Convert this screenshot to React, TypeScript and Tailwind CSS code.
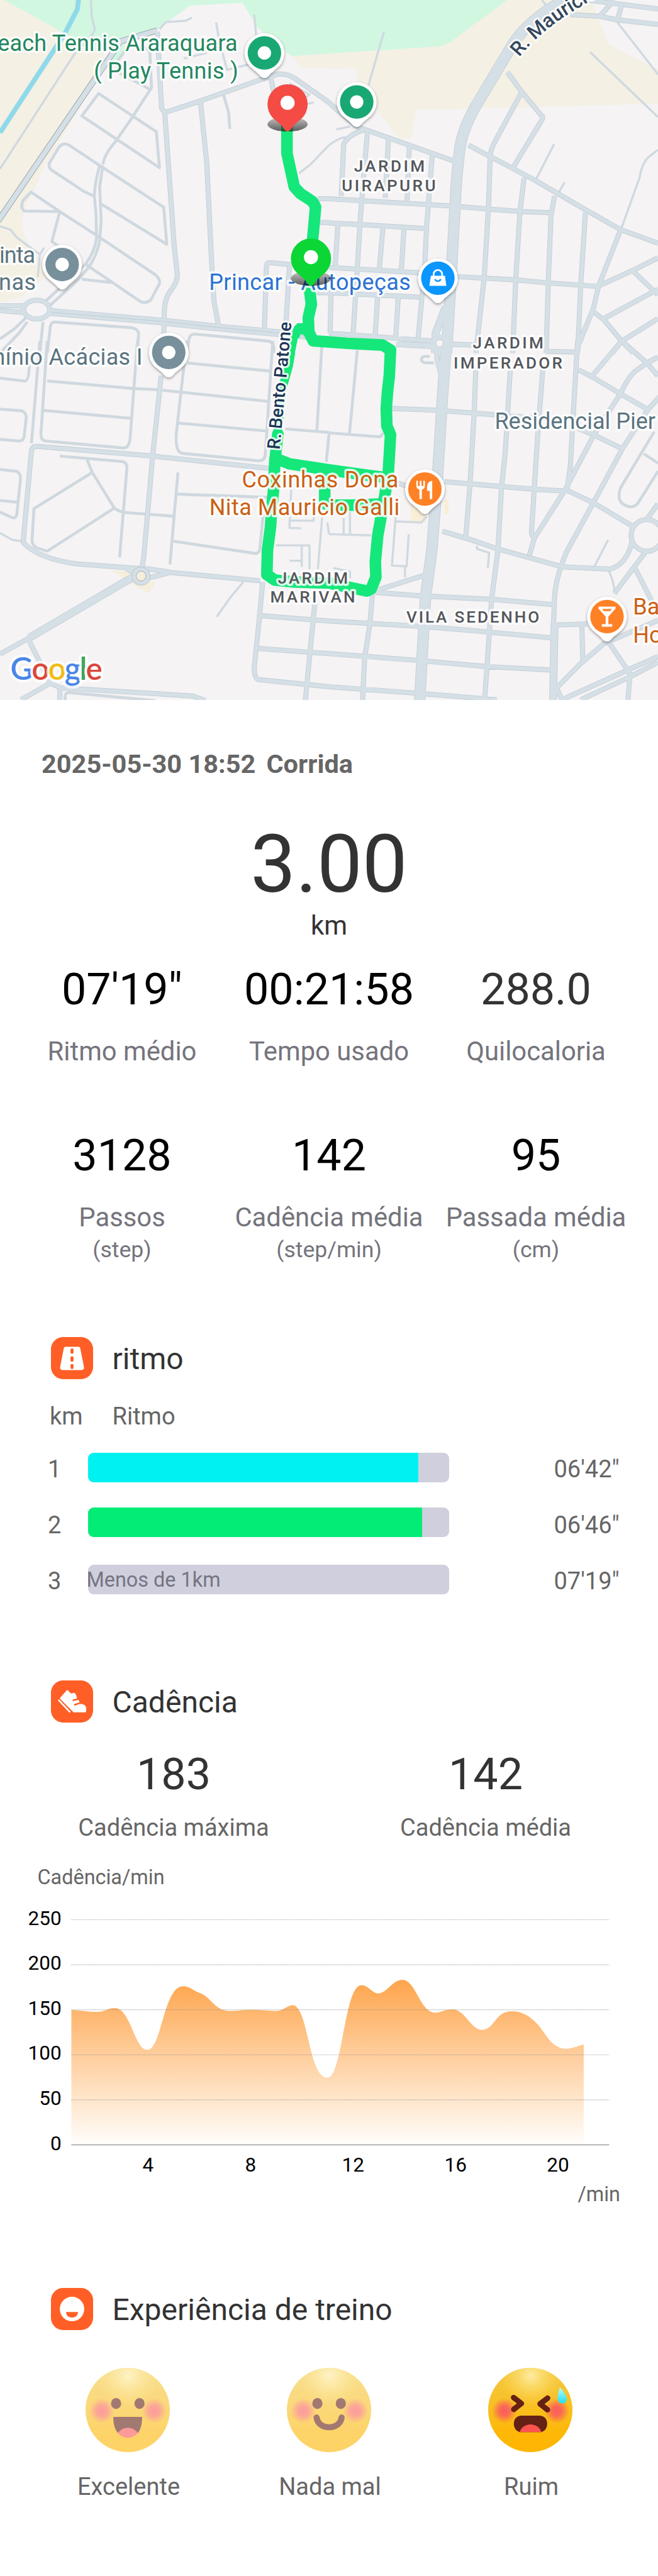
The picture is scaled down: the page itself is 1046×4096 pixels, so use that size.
import React from "react";

/* ------------------------------------------------------------------ map */

type Tile = {
  transform: string;
  minor: string;
  local: string;
  medium: string;
  major: string;
};

const TILE_NW = "scale(0.344388 0.369898)";
const TILE_NE = "translate(540 0) scale(0.344388 0.369898)";
const TILE_SW = "translate(0 560) scale(0.344388 0.382653)";
const TILE_SE = "translate(540 560) scale(0.344388 0.382653)";

const tiles: Tile[] = [
  {
    transform: TILE_NW,
    minor:
      "M680 210Q720 215 715 250L722 390L635 515L550 630Q500 680 490 730 M560 270L600 220 M560 320L712 395 M1065 420L1090 500L1095 572 M470 415L390 515L760 745L745 585Z M475 735L330 645Q300 630 280 655L235 725Q230 745 245 755L400 850L445 870 M475 735L780 920L795 1085L480 905 M475 735Q450 820 450 870L458 960L460 1060Q450 1120 410 1170L215 1340 M490 735L475 830L482 980L475 1070Q460 1140 420 1190L370 1245L240 1355 M285 940L115 937Q95 920 110 890L148 853L285 940L460 1045L740 1220Q765 1240 760 1260L720 1330Q700 1350 670 1340L410 1175 M285 940L247 1073L290 1100 M390 1240L530 1255 M205 1430L190 1568 M225 1568L240 1450Q245 1430 260 1430L620 1455Q665 1460 660 1490L655 1568 M890 1568L900 1510Q905 1482 930 1484L1280 1515Q1310 1520 1305 1568 M130 1405L70 1460L0 1505 M130 1430L90 1480L0 1568",
    local:
      "M0 1358L120 1358 M0 1380L120 1388 M750 140L770 480L785 500L830 1090L845 1220Q845 1250 825 1275L800 1310Q780 1350 783 1410L780 1500 M785 500L950 450L1270 345L1330 328Q1370 328 1400 345L1568 455 M955 450L985 720L1010 1190L1020 1340L1042 1450 M1290 345L1310 430 M1260 1460L1270 1180Q1272 1165 1290 1167L1390 1175 M1380 1175L1360 1480 M1515 883H1568 M1515 988H1568 M1510 1300H1568 M237 1375a62 42 0 1 1 -124 0a62 42 0 1 1 124 0",
    medium: "M235 1385L770 1428L1040 1455L1470 1492",
    major: "",
  },
  {
    transform: TILE_NE,
    minor: "M0 1568",
    local:
      "M0 455L40 490L130 560L170 575L595 715 M0 883L580 915L920 940L1055 945 M0 990L160 998L455 1015 M0 1188L320 1205L440 1212 M600 1228L890 1243L1060 1258L1280 1272 M0 1300L430 1320 M0 1480L500 1515 M170 575Q90 600 70 640L58 870 M183 585L150 960L135 1190L115 1480 M283 620L268 880 M383 650L372 890 M492 690L465 1010L455 1200L425 1500 M42 1000L30 1180 M257 1010L240 1195 M357 1020L345 1200 M10 1300L5 1480 M232 1315L220 1490 M330 1320L318 1500 M850 320L920 410L1010 510Q1025 520 1010 540L880 740 M915 415L790 630Q768 670 768 700L760 920L740 1230L700 1568 M665 645L870 745L990 805L1220 930L1390 1020L1568 1080 M930 790L910 940L890 1240L875 1568 M1075 870L1058 960L1045 1250L1035 1568 M1222 945L1200 1260L1185 1568 M1390 1020L1285 1270L1260 1370L1190 1530 M1285 1270L1450 1200L1568 1145 M1450 1205L1568 1310 M1260 1385L1310 1420L1395 1515L1450 1568 M1310 1415L1568 1285 M1395 1515L1568 1415 M1395 1515L1350 1568 M1230 0L1568 40 M1150 65L1290 72L1370 88L1568 108 M1290 72L1360 0 M1395 20L1375 90 M575 1528L690 1532 M320 1530L500 1540",
    medium: "M555 1365L508 1480L505 1568",
    major:
      "M1140 -10Q960 80 880 190L700 470Q640 570 625 650Q605 800 602 900L575 1340L560 1568",
  },
  {
    transform: TILE_SW,
    minor:
      "M190 0L150 440 M225 0L195 400Q195 430 220 430L590 460Q615 460 620 420L655 0 M225 172L640 205L755 210 M775 212L1280 260 M200 298L620 332 M890 0L840 400Q835 480 870 483L1235 515Q1265 515 1265 480L1300 0 M895 95L1290 130 M850 353L1270 387 M285 495L580 518Q605 520 605 545L570 930 M415 510L440 565L545 718L225 903L180 890Q150 880 153 850L162 720L440 565 M545 718Q570 735 600 737L830 753 M848 565L810 960 M840 658L1280 672 M825 860L1220 913Q1240 910 1240 880L1260 690 M0 160L120 173Q138 170 140 100 M0 293L100 300Q125 305 125 330L115 410Q112 430 90 430L0 423 M0 552L80 560Q98 570 98 590L80 745Q75 765 55 758L0 735 M0 685L85 693 M1360 378L1568 393 M1535 0L1510 390 M1568 400L1555 520 M310 1545V1525Q312 1510 330 1510L740 1545",
    local:
      "M768 150L728 490L685 930L675 980 M1240 1030L820 995L700 978L620 975L370 958Q180 935 110 865L150 470Q155 452 180 453L730 495L1290 548 M140 1275L0 1345 M140 1290L240 1470L290 1490L920 1525L980 1545 M240 1470L100 1541 M285 1495V1545 M1252 1035L1235 1200L1212 1400Q1210 1450 1235 1455L1568 1485 M1245 1180L1568 1203 M1220 1320L1568 1343 M1500 1130L1455 1545 M590 970L650 1005 M700 1020L810 995",
    medium: "M650 1010L600 1032L140 1275",
    major: "",
  },
  {
    transform: TILE_SE,
    minor:
      "M135 40L97 405 M0 395L235 412Q252 412 255 395 M1550 390L1390 630Q1370 680 1400 700Q1440 725 1470 700L1568 560 M1500 485L1568 525 M480 67H450Q430 80 450 93L500 95",
    local:
      "M300 290L510 298L800 318L980 330 M550 605L980 637L1130 645 M330 612L380 625 M540 817L680 855L810 895L1110 970L1340 980Q1420 960 1445 860 M700 110L692 310L672 615L652 840 M865 110L840 480L822 630L805 900L775 1110L742 1541 M1020 110L995 400L965 820Q965 840 980 845L955 920 M980 845L1125 640L1265 400L1390 225Q1430 150 1460 130L1515 95L1568 70 M1185 0L1165 300L1150 540L1135 640 M1190 125L1255 155L1385 225L1520 295 M1255 150L1395 0 M1395 0L1515 95L1568 150 M1575 240L1520 295L1400 460L1260 695L1130 910Q1080 1020 1075 1100L1070 1220 M1130 640L1260 695L1445 795 M1185 375L1265 405L1400 465 M1590 835a75 68 0 1 1 -150 0a75 68 0 1 1 150 0 M1515 765L1568 700 M1510 905L1455 970L1360 1085 M1455 970L1540 1120 M220 1080L440 1095L780 1110L1065 1132 M230 1070L460 1005 M0 1203L430 1225L760 1250L1060 1275 M0 1343L420 1372L745 1398L1055 1413 M0 1485L410 1512L800 1541 M207 1090L195 1215L170 1360L160 1541 M1085 1220L1230 1215 M1205 1225L1210 1370 M1085 1490L1200 1385L1310 1300L1568 1200 M1330 1290L1435 1430L1425 1541 M1110 1541L1420 1415L1568 1355 M1200 1541L1440 1440L1568 1380 M1085 1490L1110 1541 M330 12L500 20 M575 15L700 18 M1035 45L1180 48 M510 0L515 80L535 150",
    medium: "M1075 1215L1068 1545",
    major: "M560 -5L540 250L515 620L490 900L460 1100L432 1545",
  },
];

const paths: { transform: string; d: string }[] = [
  {
    transform: TILE_NW,
    d: "M433 0L437 70L452 130L440 155L355 240L0 750 M1030 100L1045 180L1082 310L1190 285 M1212 65L1222 170 M760 130L790 98L885 92L915 78 M875 260L985 235 M0 1005L50 1020L80 1055L190 1130 M210 1100L190 1130L180 1230 M1425 770L1480 730L1568 645 M1380 370L1475 420L1400 475L1495 455",
  },
  {
    transform: TILE_NE,
    d: "M0 645Q50 610 80 610 M1375 100L1568 330 M1245 232L1568 520 M262 140L188 380 M1073 640L985 800 M1123 810L1095 855 M1395 1010L1480 790Q1490 730 1520 700L1568 665 M1015 0L1040 30 M35 575L100 562",
  },
  {
    transform: TILE_SW,
    d: "M0 825L60 855L105 860 M1160 1035L1095 1105L1033 1185 M1535 760L1515 980 M1390 600L1380 790L1380 803L1435 805 M1385 772H1495V750 M1315 878H1475V980 M1438 880V970 M1380 944H1440 M1568 830L1560 780",
  },
  {
    transform: TILE_SE,
    d: "M0 830L200 835 M70 760V830 M100 735V830 M318 750L300 965L370 968L380 830 M362 970V1015 M320 775L440 780L465 755 M705 880V893L763 910L757 975 M1330 855L1265 968 M1335 990Q1360 1040 1360 1075 M20 975L100 990V1020",
  },
];

function RoadPass({ kind, color, width }: { kind: "minor" | "local" | "medium" | "major"; color: string; width: number }) {
  return (
    <>
      {tiles.map((t) => (
        <g key={t.transform} transform={t.transform}>
          <path d={t[kind] || "M0 0"} stroke={color} strokeWidth={width} vectorEffect="non-scaling-stroke" />
        </g>
      ))}
    </>
  );
}

function PoiPin({ x, y, color, children }: { x: number; y: number; color: string; children?: React.ReactNode }) {
  return (
    <g transform={`translate(${x} ${y})`}>
      <path
        d="M0 41C-5 41 -7 37 -11 33L-24 22A32.5 32.5 0 1 1 24 22L11 33C7 37 5 41 0 41Z"
        fill="#fff"
        filter="url(#pinShadow)"
      />
      <circle r="27.5" fill={color} />
      {children ?? <circle r="11" fill="#fff" />}
    </g>
  );
}

function RoutePin({ x, y, color, tip }: { x: number; y: number; color: string; tip: number }) {
  return (
    <g transform={`translate(${x} ${y})`}>
      <ellipse cy="32" rx="33" ry="12" fill="url(#ground)" />
      <path d={`M0 ${tip}C-4 ${tip} -7 38 -10 34L-24 22A33 33 0 1 1 24 22L10 34C7 38 4 ${tip} 0 ${tip}Z`} fill={color} />
      <circle cy="-3" r="11.6" fill="#fff" />
    </g>
  );
}

function MapLabel({
  x,
  y,
  end,
  color,
  children,
}: {
  x: number;
  y: number;
  end?: number;
  color: string;
  children: string;
}) {
  return (
    <text
      x={x}
      y={y}
      fontSize="37.2"
      fill={color}
      stroke="#fff"
      strokeOpacity="0.85"
      strokeWidth="7"
      strokeLinejoin="round"
      paintOrder="stroke"
      textLength={end ? end - x : undefined}
    >
      {children}
    </text>
  );
}

function AreaLabel({ x, y, end, children }: { x: number; y: number; end: number; children: string }) {
  return (
    <text
      x={x}
      y={y}
      fontSize="27"
      fontWeight="500"
      fill="#54575b"
      stroke="#fff"
      strokeOpacity="0.85"
      strokeWidth="7"
      strokeLinejoin="round"
      paintOrder="stroke"
      textLength={end - x}
    >
      {children}
    </text>
  );
}

function RouteMap() {
  return (
    <svg
      viewBox="0 0 1080 1150"
      preserveAspectRatio="none"
      className="block h-[1113px] w-full font-['Roboto',sans-serif]"
    >
      <defs>
        <filter id="pinShadow" x="-30%" y="-30%" width="160%" height="160%">
          <feDropShadow dx="0" dy="2" stdDeviation="2" floodColor="#000" floodOpacity="0.4" />
        </filter>
        <linearGradient id="ground" x1="0" y1="0" x2="0" y2="1">
          <stop offset="0" stopColor="#000" stopOpacity="0.2" />
          <stop offset="1" stopColor="#000" stopOpacity="0.62" />
        </linearGradient>
        <path id="mauricio" d="M852 94L866 78Q896 47 932 24L1010 -24" />
        <path id="bento" d="M459 739L479 525" />
      </defs>

      <rect width="1080" height="1150" fill="#f5f3f4" />
      <g transform={TILE_NW}>
        <path d="M0 0H1568V238L1390 250L1225 120L1155 12L905 25L750 130L580 180L480 245L310 150L0 -10Z" fill="#d1f7e1" />
        <path d="M0 0L20 0L290 140L490 240L500 290L200 760L170 830Q90 950 110 1020Q130 1120 250 1200L100 1320L0 1345Z" fill="#f4f0e4" />
        <path d="M500 260L600 195L570 270L520 310Z" fill="#d1f7e1" />
        <path d="M1390 250L1570 238V303H1445Z" fill="#f4f0e4" />
      </g>
      <g transform={TILE_NE}>
        <path d="M0 0H850L575 190L530 207L0 238Z" fill="#d1f7e1" />
        <path
          d="M850 0H1250L1330 195L1568 310V460L1010 475L415 488L395 610L335 615L235 500L180 400L140 380L127 303L-3 305V238L530 207L575 190Z"
          fill="#f4f0e4"
        />
      </g>
      <g transform={TILE_SW}>
        <path d="M530 985L600 990L660 1010L740 1040L710 1085L640 1050Z" fill="#f6eedc" />
      </g>
      <g transform={TILE_SE}>
        <path d="M390 700L455 720L460 780H390Z M550 680H570V745H550Z" fill="#f9eed6" />
      </g>

      <g fill="none" strokeLinejoin="round">
        <path d="M129 -2L127 15L107 54L0 218" stroke="#8fd9ea" strokeWidth="8" />
        {paths.map((p) => (
          <g key={p.transform} transform={p.transform}>
            <path d={p.d} stroke="#d0d9e0" strokeWidth="3.4" vectorEffect="non-scaling-stroke" />
          </g>
        ))}
        <RoadPass kind="minor" color="#cfd8df" width={4.6} />
        <path d="M-3 363L198 68L258 50" stroke="#9aa4ad" strokeWidth="10" />
        <path d="M395 -2" stroke="#9aa4ad" />
        <RoadPass kind="local" color="#c4ced6" width={8} />
        <RoadPass kind="medium" color="#c4ced6" width={12.4} />
        <RoadPass kind="major" color="#c4ced6" width={18} />
        <path d="M-3 363L198 68L258 50" stroke="#d5dfe6" strokeWidth="8" />
        <RoadPass kind="local" color="#d5dfe6" width={6.2} />
        <RoadPass kind="medium" color="#d5dfe6" width={10.6} />
        <RoadPass kind="major" color="#d5dfe6" width={16.2} />
        <path d="M84 513L265 528L358 538L500 551" stroke="#c4ced6" strokeWidth="1.2" />
        <circle cx="231.5" cy="946.5" r="11" stroke="#bcc5cc" strokeWidth="9" />
        <circle cx="231.5" cy="946.5" r="11" stroke="#d5dfe6" strokeWidth="7" />
        <circle cx="231.5" cy="946.5" r="8" fill="#f6eedc" stroke="#a4adb4" />
        <circle cx="721.5" cy="564" r="10" stroke="#d5dfe6" strokeWidth="9" />
        <circle cx="721.5" cy="564" r="6" fill="#f5f3f4" stroke="#c4ced6" />
      </g>

      <g fill="none" stroke="#15e77a" strokeWidth="19" strokeLinejoin="round" strokeLinecap="round">
        <path
          d="M471 207V252L483 307L493 318L513 331L518 340L513 395L511 440L508 475L511 500L506 522L507 546L514 560L530 561L570 564L628 567L641 575L639 617L636 644L634 671L635 700L641 714L637 782L628 835L620 880L616 923L617 948L609 968L602 971L574 965L540 958L482 956L451 953L438 944L439 904L444 866L446 835L449 805L451 759L456 713"
        />
        <path d="M452 753L475 762L540 772L612 782L637 785 M533 785V828 M540 830L578 830L622 828" />
      </g>
      <g fill="none" stroke="#15e77a" strokeLinejoin="round">
        <path d="M455 715L463 640L474 600L480 565L489 540L506 545" strokeWidth="14" />
        <path d="M487 540L510 540" strokeWidth="18" />
      </g>
      <path d="M489 555L498 562V575L484 580Z" fill="#f5f3f4" />

      <MapLabel x={-4} y={84} end={390} color="#23875f">each Tennis Araraquara</MapLabel>
      <MapLabel x={154} y={129} end={391} color="#23875f">( Play Tennis )</MapLabel>
      <MapLabel x={-1} y={432} end={58} color="#5a7480">inta</MapLabel>
      <MapLabel x={-2} y={476.5} end={59} color="#5a7480">nas</MapLabel>
      <MapLabel x={-24} y={599} end={234} color="#5a7480">mínio Acácias I</MapLabel>
      <MapLabel x={812} y={704.5} color="#5a7480">Residencial Pier</MapLabel>
      <MapLabel x={343} y={476.5} end={674} color="#2a72d4">Princar - Autopeças</MapLabel>
      <MapLabel x={397} y={800.5} end={654} color="#cc5f12">Coxinhas Dona</MapLabel>
      <MapLabel x={343.5} y={846} end={656} color="#cc5f12">Nita Mauricio Galli</MapLabel>
      <MapLabel x={1039} y={1009.5} color="#cc5f12">Ba</MapLabel>
      <MapLabel x={1039} y={1055.5} color="#cc5f12">Ho</MapLabel>

      <AreaLabel x={581} y={282} end={697}>JARDIM</AreaLabel>
      <AreaLabel x={561} y={314} end={715}>UIRAPURU</AreaLabel>
      <AreaLabel x={776} y={572} end={892}>JARDIM</AreaLabel>
      <AreaLabel x={744.5} y={605} end={923}>IMPERADOR</AreaLabel>
      <AreaLabel x={456} y={958.5} end={571}>JARDIM</AreaLabel>
      <AreaLabel x={443.5} y={990} end={583}>MARIVAN</AreaLabel>
      <AreaLabel x={667} y={1022.5} end={885}>VILA SEDENHO</AreaLabel>

      <g fontWeight="500" stroke="#fff" strokeOpacity="0.9" strokeWidth="6" strokeLinejoin="round" paintOrder="stroke">
        <text fontSize="32.5" fill="#35475b">
          <textPath href="#mauricio">R. Mauricio</textPath>
        </text>
        <text fontSize="29.3" fill="#1d3557">
          <textPath href="#bento">R. Bento Patone</textPath>
        </text>
      </g>

      <PoiPin x={434} y={87} color="#19a873" />
      <PoiPin x={585.5} y={167.5} color="#19a873" />
      <PoiPin x={102} y={434.5} color="#78909c" />
      <PoiPin x={277} y={579} color="#78909c" />
      <PoiPin x={718.7} y={457} color="#0a96ff">
        <path d="M-11.5 -4H11.5L14 12.5H-14Z" fill="#fff" />
        <path d="M-7 -3V-6.5A7 7 0 0 1 7 -6.5V-3" fill="none" stroke="#fff" strokeWidth="2.8" />
        <path d="M-4.5 1.5A4.6 4.2 0 0 0 4.5 1.5" fill="none" stroke="#0a96ff" strokeWidth="2.6" />
      </PoiPin>
      <PoiPin x={697.4} y={803.5} color="#ff8126">
        <path
          d="M-14 -13.5V-5A6.5 6.5 0 0 0 -9 1V16.5H-5V1A6.5 6.5 0 0 0 0 -5V-13.5H-2.6V-5H-5.6V-13.5H-8.4V-5H-11.4V-13.5Z M12 -13.5C6 -13 3.5 -8 3.5 -3V3H8V16.5H12Z"
          fill="#fff"
        />
      </PoiPin>
      <PoiPin x={996.3} y={1013} color="#ff8126">
        <path d="M-14 -16.5H14V-13L2.2 0V12.5H8.5V16.5H-8.5V12.5H-2.2V0L-14 -13Z" fill="#fff" />
        <path d="M-8 -12.5H8L5.2 -9H-5.2Z" fill="#ff8126" />
      </PoiPin>

      <RoutePin x={472} y={172} color="#f44b45" tip={44} />
      <RoutePin x={510.4} y={425.5} color="#0cd636" tip={44} />

      <text
        x="17"
        y="1116.5"
        fontSize="51"
        fontWeight="600"
        textLength="151"
        stroke="#fff"
        strokeOpacity="0.7"
        strokeWidth="9"
        strokeLinejoin="round"
        paintOrder="stroke"
        className="font-['Lato',sans-serif]"
      >
        <tspan fill="#4a86e8">G</tspan>
        <tspan fill="#da483b">o</tspan>
        <tspan fill="#f1bc18">o</tspan>
        <tspan fill="#4a86e8">g</tspan>
        <tspan fill="#3fa65a">l</tspan>
        <tspan fill="#da483b">e</tspan>
      </text>
    </svg>
  );
}

/* ---------------------------------------------------------------- icons */

function RoadIcon() {
  return (
    <>
      <path d="M24 16H45Q47.500 16 48 18.500L54 49Q54.500 54 50 54H19Q14.500 54 15 49L21 18.500Q21.500 16 24 16Z" fill="#fff" />
      <path d="M34.500 21V25M34.500 34V38M34.500 46.500V50" stroke="#ff5f26" strokeWidth="5" strokeLinecap="round" />
    </>
  );
}

function ShoeIcon() {
  return (
    <g transform="scale(0.3333) translate(-69 -60)">
      <path
        d="M112 148L145 110Q150 106 155 110Q160 122 172 124Q182 118 188 124Q196 135 197 148L176 154Q172 158 178 162L204 155L210 167L184 176Q180 180 185 184L212 175Q240 176 242 195Q244 217 236 217H180Z"
        fill="#fff"
      />
      <path d="M108 158L161 214" stroke="#fff" strokeWidth="8" strokeLinecap="round" />
    </g>
  );
}

function FaceIcon() {
  return (
    <>
      <circle cx="34.500" cy="34.500" r="20" fill="#fff" />
      <path d="M24.500 39.500H44.500Q43.500 48.500 34.500 48.500Q25.500 48.500 24.500 39.500Z" fill="#ff5f26" />
    </>
  );
}

function SectionTitle({ title, children }: { title: string; children: React.ReactNode }) {
  return (
    <div className="flex h-[67px] items-center pl-[80.5px]">
      <svg viewBox="0 0 69 69" className="size-[67px] shrink-0">
        <rect width="69" height="69" rx="20" fill="#ff5f26" />
        {children}
      </svg>
      <h2 className="ml-[31px] pt-[2px] text-[48px] leading-[60px] text-[#333]">{title}</h2>
    </div>
  );
}

/* --------------------------------------------------------------- emojis */

function Emoji({ faded, children }: { faded?: boolean; children: React.ReactNode }) {
  return (
    <svg viewBox="60 56 414 414" className={faded ? "size-[134px] opacity-60" : "size-[134px]"}>
      <circle cx="267" cy="263" r="207" fill="url(#skin)" />
      <circle cx="267" cy="263" r="207" fill="url(#shine)" />
      <circle cx="140" cy="267" r="62" fill="url(#cheek)" />
      <circle cx="397" cy="267" r="62" fill="url(#cheek)" />
      {children}
    </svg>
  );
}

function EmojiDefs() {
  return (
    <svg className="absolute size-0">
      <defs>
        <linearGradient id="skin" x1="0" y1="0" x2="0" y2="1">
          <stop offset="0" stopColor="#f3c947" />
          <stop offset="0.45" stopColor="#f8c022" />
          <stop offset="0.75" stopColor="#fdb808" />
          <stop offset="1" stopColor="#feb500" />
        </linearGradient>
        <radialGradient id="shine" gradientUnits="userSpaceOnUse" cx="270" cy="95" r="150">
          <stop offset="0" stopColor="#ffeea8" stopOpacity="0.95" />
          <stop offset="0.5" stopColor="#ffe37a" stopOpacity="0.5" />
          <stop offset="1" stopColor="#ffd94f" stopOpacity="0" />
        </radialGradient>
        <radialGradient id="cheek">
          <stop offset="0" stopColor="#fb5c5c" />
          <stop offset="0.4" stopColor="#fb5c5c" stopOpacity="0.85" />
          <stop offset="1" stopColor="#fb5c5c" stopOpacity="0" />
        </radialGradient>
        <linearGradient id="drop" x1="0" y1="0" x2="0" y2="1">
          <stop offset="0" stopColor="#b9fbf6" />
          <stop offset="1" stopColor="#1fdff0" />
        </linearGradient>
      </defs>
    </svg>
  );
}

const DARK = "#652113";

function HappyEmoji() {
  return (
    <Emoji faded>
      <ellipse cx="210" cy="231" rx="25" ry="27" fill={DARK} />
      <ellipse cx="325" cy="231" rx="25" ry="27" fill={DARK} />
      <path d="M196 297H338Q338 350 318 375L267 385L218 375Q196 350 196 297Z" fill={DARK} />
      <path d="M218 376Q240 350 267 350Q295 350 318 376Q295 400 267 400Q240 400 218 376Z" fill="#fb5656" />
    </Emoji>
  );
}

function SmileEmoji() {
  return (
    <Emoji faded>
      <ellipse cx="210" cy="231" rx="25" ry="27" fill={DARK} />
      <ellipse cx="325" cy="231" rx="25" ry="27" fill={DARK} />
      <path d="M206 300C214 364 321 364 329 300" fill="none" stroke={DARK} strokeWidth="30" strokeLinecap="round" />
    </Emoji>
  );
}

function TiredEmoji() {
  return (
    <Emoji>
      <path
        d="M185 202L223 231L186 260 M352 205L315 233L351 262"
        fill="none"
        stroke={DARK}
        strokeWidth="27"
        strokeLinecap="round"
        strokeLinejoin="round"
      />
      <path d="M226 291H310Q350 293 350 333Q348 362 322 372H214Q188 362 186 333Q186 293 226 291Z" fill={DARK} />
      <path d="M214 372Q228 335 268 334Q308 335 322 372Z" fill="#fb5450" />
      <path d="M412 152Q436 176 445 202Q450 226 427 231Q404 230 401 208Q401 180 412 152Z" fill="url(#drop)" />
    </Emoji>
  );
}

/* ---------------------------------------------------------------- parts */

function Stat({ value, label, unit, soft }: { value: string; label: string; unit?: string; soft?: boolean }) {
  return (
    <div className="flex flex-col items-center whitespace-nowrap">
      <div className={soft ? "text-[70px] leading-[80px] text-[#333]" : "text-[70px] leading-[80px] text-black"}>{value}</div>
      <div className="mt-[34px] text-[41.8px] leading-[50px] text-[#74747c]">{label}</div>
      {unit && <div className="mt-[5px] text-[35.6px] leading-[42px] text-[#74747c]">{unit}</div>}
    </div>
  );
}

function CadenceStat({ value, label }: { value: string; label: string }) {
  return (
    <div className="flex flex-col items-center">
      <div className="text-[70px] leading-[80px] text-[#333]">{value}</div>
      <div className="mt-[22px] text-[38px] leading-[46px] text-[#666]">{label}</div>
    </div>
  );
}

const laps = [
  { km: 1, pace: "06'42\"", fill: 91.6, color: "bg-[#00f2f0]", lift: "pb-[4px]", note: "" },
  { km: 2, pace: "06'46\"", fill: 92.6, color: "bg-[#03ec75]", lift: "pb-[8px]", note: "" },
  { km: 3, pace: "07'19\"", fill: 0, color: "bg-transparent", lift: "pb-[4px]", note: "Menos de 1km" },
];

function Laps() {
  return (
    <div className="mt-[16px] text-[38px] leading-[46px] text-[#666]">
      {laps.map((lap) => (
        <div key={lap.km} className="flex h-[89px] items-center pl-[76px]">
          <span className="w-[63.500px]">{lap.km}</span>
          <div className={lap.lift}>
            <div className="flex h-[47.5px] w-[574px] items-center overflow-hidden rounded-[9px] bg-[#d0cfdd]">
              <div className={`h-full ${lap.color}`} style={{ width: `${lap.fill}%` }} />
              {lap.note && <span className="-ml-[2px] text-[32.4px] text-[#757584]">{lap.note}</span>}
            </div>
          </div>
          <span className="ml-[167px]">{lap.pace}</span>
        </div>
      ))}
    </div>
  );
}

const yTicks = [250, 200, 150, 100, 50, 0];
const xTicks = [4, 8, 12, 16, 20];

function CadenceChart() {
  return (
    <svg viewBox="0 3103 1080 480" preserveAspectRatio="none" className="block h-[465px] w-full font-['Roboto',sans-serif]">
      <defs>
        <linearGradient id="area" x1="0" y1="0" x2="0" y2="1">
          <stop offset="0" stopColor="#fea54c" />
          <stop offset="1" stopColor="#fffefc" />
        </linearGradient>
      </defs>
      <g transform="translate(0 2720) scale(0.688776 0.586735)">
        <path
          d="M170 991C195 991 210 996 232 996C252 996 256 985 273 985C312 985 320 1102 351 1102C385 1102 390 924 436 924C452 924 462 937 476 943C502 953 512 992 545 993C570 993 580 990 597 990C620 990 640 993 660 993C675 993 685 977 697 977C735 977 735 1180 780 1180C817 1180 820 921 861 921C878 921 887 944 901 944C922 944 936 906 958 906C992 906 1000 998 1038 998C1052 998 1060 989 1077 989C1110 989 1120 1046 1149 1046C1178 1046 1180 994 1219 994C1245 994 1260 1008 1272 1020C1300 1048 1310 1099 1350 1099C1365 1099 1375 1091 1391 1087V1368H170Z"
          fill="url(#area)"
        />
      </g>
      {yTicks.map((v) => {
        const y = 3522.5 - v * 1.4776;
        return (
          <g key={v}>
            <path
              d={`M117 ${y}H1000`}
              stroke={v === 0 ? "#a9a9ae" : "#8a8a8e"}
              strokeOpacity={v === 0 ? 1 : 0.55}
              strokeWidth={v === 0 ? 2 : 1.2}
              strokeDasharray={v === 0 ? undefined : "2 1"}
            />
            <text x="101" y={y + 8.4} textAnchor="end" fontSize="32.6" fill="#000">
              {v}
            </text>
          </g>
        );
      })}
      {xTicks.map((v) => (
        <text key={v} x={117 + (v - 1) * 42.05} y="3566.5" textAnchor="middle" fontSize="32.6" fill="#000">
          {v}
        </text>
      ))}
    </svg>
  );
}

/* ----------------------------------------------------------------- page */

const moods = [
  { label: "Excelente", face: <HappyEmoji /> },
  { label: "Nada mal", face: <SmileEmoji /> },
  { label: "Ruim", face: <TiredEmoji /> },
];

export default function App() {
  return (
    <main className="flex h-[4096px] w-[1046px] flex-col overflow-hidden bg-white font-['Roboto',sans-serif]">
      <EmojiDefs />
      <RouteMap />

      <div className="mt-[77px] pl-[66px] text-[41.5px] font-bold leading-[50px] text-[#666]">
        <span>2025-05-30 18:52</span>
        <span className="ml-[17px]">Corrida</span>
      </div>

      <div className="mt-[64px] text-center text-[128px] leading-[140px] text-[#333]">3.00</div>
      <div className="mt-[3px] text-center text-[42px] leading-[50px] text-[#333]">km</div>

      <section className="mx-auto mt-[36px] grid w-[987px] grid-cols-3">
        <Stat value={"07'19\""} label="Ritmo médio" />
        <Stat value="00:21:58" label="Tempo usado" />
        <Stat value="288.0" label="Quilocaloria" soft />
      </section>
      <section className="mx-auto mt-[100px] grid w-[987px] grid-cols-3">
        <Stat value="3128" label="Passos" unit="(step)" />
        <Stat value="142" label="Cadência média" unit="(step/min)" />
        <Stat value="95" label="Passada média" unit="(cm)" />
      </section>

      <section className="mt-[118px]">
        <SectionTitle title="ritmo">
          <RoadIcon />
        </SectionTitle>
        <div className="mt-[36px] flex pl-[79px] text-[38px] leading-[46px] text-[#666]">
          <span className="w-[99.5px]">km</span>
          <span>Ritmo</span>
        </div>
        <Laps />
      </section>

      <section className="mt-[114px]">
        <SectionTitle title="Cadência">
          <ShoeIcon />
        </SectionTitle>
        <div className="ml-[28px] mt-[42px] grid w-[992px] grid-cols-2">
          <CadenceStat value="183" label="Cadência máxima" />
          <CadenceStat value="142" label="Cadência média" />
        </div>
        <div className="mt-[37px] pl-[59.5px] text-[32.4px] leading-[38px] text-[#666]">Cadência/min</div>
        <CadenceChart />
        <div className="mt-px pr-[60px] text-right text-[32.4px] leading-[38px] text-[#666]">/min</div>
      </section>

      <section className="mt-[130px]">
        <SectionTitle title="Experiência de treino">
          <FaceIcon />
        </SectionTitle>
        <div className="ml-[42.5px] mt-[60px] grid w-[960px] grid-cols-3">
          {moods.map((m) => (
            <div key={m.label} className="flex flex-col items-center">
              {m.face}
              <div className="mt-[32px] pl-[4px] text-[38px] leading-[46px] text-[#666]">{m.label}</div>
            </div>
          ))}
        </div>
      </section>
    </main>
  );
}
